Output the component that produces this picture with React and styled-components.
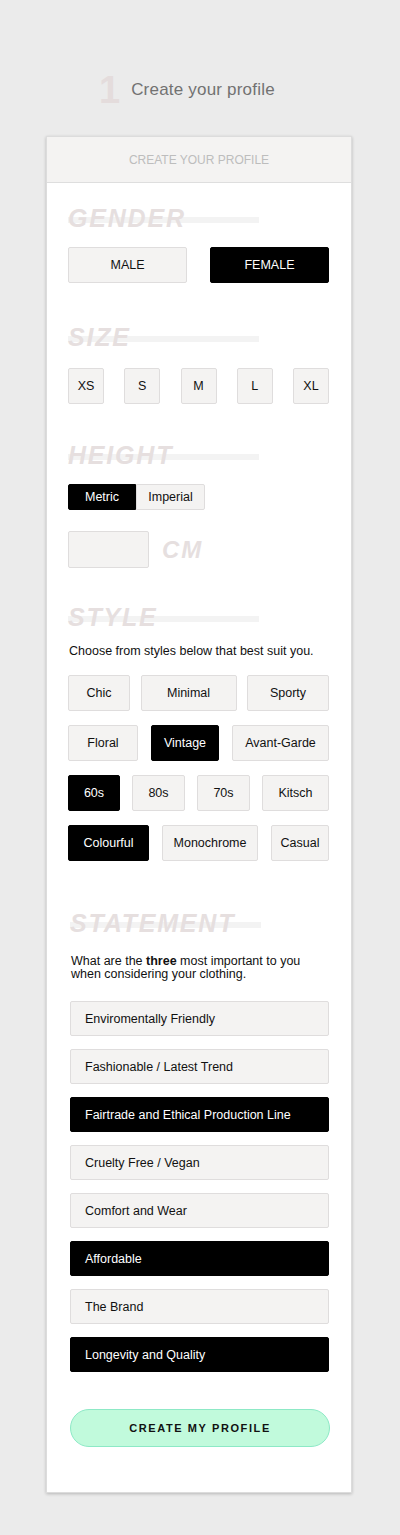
import React, { useState } from 'react';
import styled, { createGlobalStyle, css } from 'styled-components';

const GlobalStyle = createGlobalStyle`
  html, body {
    margin: 0;
    padding: 0;
    background: #ebebeb;
  }
  body {
    font-family: "Liberation Sans", Arial, sans-serif;
    color: #111;
  }
  * {
    box-sizing: border-box;
  }
`;

const Page = styled.div`
  min-height: 1535px;
  padding-top: 70px;
  padding-bottom: 42px;
`;

const StepRow = styled.div`
  display: flex;
  align-items: center;
  gap: 11px;
  height: 40px;
  padding-left: 99px;
`;

const StepNumber = styled.span`
  font-size: 38px;
  font-weight: 700;
  line-height: 40px;
  color: #e4dcdc;
`;

const StepTitle = styled.span`
  font-size: 17px;
  letter-spacing: 0.2px;
  color: #727272;
`;

const Card = styled.div`
  width: 306px;
  margin: 26px 0 0 46px;
  background: #fff;
  border: 1px solid #dcdcdc;
  box-shadow: 0 1px 3px rgba(0, 0, 0, 0.22);
`;

const CardHeader = styled.div`
  height: 46px;
  display: flex;
  align-items: center;
  justify-content: center;
  background: #f4f3f2;
  border-bottom: 1px solid #dedede;
  font-size: 12px;
  color: #bdbdbd;
`;

const CardBody = styled.div`
  padding: 23px 22px 45px 21px;
`;

const Section = styled.section`
  margin-top: ${({ $gap }) => $gap || 0}px;
  padding-left: ${({ $inset }) => $inset || 0}px;
`;

const Heading = styled.h2`
  margin: 0 0 ${({ $after }) => $after ?? 16}px 0;
  font-size: 25px;
  line-height: 25px;
  font-weight: 700;
  font-style: italic;
  letter-spacing: 1.8px;
  color: #e6dfdf;
  background: linear-gradient(#f3f3f3, #f3f3f3) no-repeat;
  background-size: 191px 6px;
  background-position: 0 11px;
`;

const boxBase = css`
  display: flex;
  align-items: center;
  justify-content: center;
  font-family: "Liberation Sans", Arial, sans-serif;
  font-size: 12.5px;
  border-radius: 2px;
  border: 1px solid ${({ $on }) => ($on ? '#000' : '#dfdddd')};
  background: ${({ $on }) => ($on ? '#000' : '#f4f3f2')};
  color: ${({ $on }) => ($on ? '#fff' : '#111')};
  padding: 0;
  cursor: pointer;
`;

const Row = styled.div`
  display: flex;
  justify-content: space-between;
`;

const GenderButton = styled.button`
  ${boxBase};
  width: 119px;
  height: 36px;
`;

const SizeButton = styled.button`
  ${boxBase};
  width: 36px;
  height: 36px;
`;

const UnitToggle = styled.div`
  display: flex;
  width: 137px;
`;

const UnitButton = styled.button`
  ${boxBase};
  width: ${({ $w }) => $w}px;
  height: 26px;
  border-radius: ${({ $first }) => ($first ? '2px 0 0 2px' : '0 2px 2px 0')};
`;

const HeightRow = styled.div`
  display: flex;
  align-items: center;
  gap: 13px;
  margin-top: 21px;
`;

const HeightInput = styled.input`
  width: 81px;
  height: 37px;
  border: 1px solid #dfdddd;
  border-radius: 2px;
  background: #f4f3f2;
  outline: none;
`;

const Unit = styled.span`
  font-size: 24px;
  font-weight: 700;
  font-style: italic;
  letter-spacing: 2px;
  color: #e6dfdf;
`;

const Intro = styled.p`
  margin: 0 0 ${({ $after }) => $after}px 1px;
  font-size: 12.5px;
  line-height: 13px;
  color: #111;

  b {
    font-weight: 700;
  }
`;

const StyleGrid = styled.div`
  display: flex;
  flex-direction: column;
  gap: 14px;
`;

const StyleButton = styled.button`
  ${boxBase};
  width: ${({ $w }) => $w}px;
  height: 36px;
`;

const StatementList = styled.div`
  display: flex;
  flex-direction: column;
  gap: 13px;
  width: 259px;
`;

const StatementItem = styled.button`
  ${boxBase};
  justify-content: flex-start;
  height: 35px;
  padding-left: 14px;
`;

const Submit = styled.button`
  display: block;
  width: 260px;
  height: 38px;
  margin: 37px 0 0 0;
  border-radius: 19px;
  border: 1px solid #8de9c6;
  background: #c1fadc;
  font-family: "Liberation Sans", Arial, sans-serif;
  font-size: 11px;
  font-weight: 700;
  letter-spacing: 1.6px;
  color: #111;
  cursor: pointer;
`;

const styleRows = [
  [['Chic', 62], ['Minimal', 96], ['Sporty', 82]],
  [['Floral', 70], ['Vintage', 68], ['Avant-Garde', 97]],
  [['60s', 52], ['80s', 53], ['70s', 53], ['Kitsch', 67]],
  [['Colourful', 81], ['Monochrome', 96], ['Casual', 58]],
];

const statements = [
  'Enviromentally Friendly',
  'Fashionable / Latest Trend',
  'Fairtrade and Ethical Production Line',
  'Cruelty Free / Vegan',
  'Comfort and Wear',
  'Affordable',
  'The Brand',
  'Longevity and Quality',
];

export default function App() {
  const [gender, setGender] = useState('FEMALE');
  const [size, setSize] = useState(null);
  const [unit, setUnit] = useState('Metric');
  const [styles, setStyles] = useState(['Vintage', '60s', 'Colourful']);
  const [picked, setPicked] = useState([
    'Fairtrade and Ethical Production Line',
    'Affordable',
    'Longevity and Quality',
  ]);

  const toggle = (list, set, value) =>
    set(list.includes(value) ? list.filter((v) => v !== value) : [...list, value]);

  return (
    <Page>
      <GlobalStyle />
      <StepRow>
        <StepNumber>1</StepNumber>
        <StepTitle>Create your profile</StepTitle>
      </StepRow>

      <Card>
        <CardHeader>CREATE YOUR PROFILE</CardHeader>
        <CardBody>
          <Section>
            <Heading>GENDER</Heading>
            <Row>
              {['MALE', 'FEMALE'].map((g) => (
                <GenderButton key={g} $on={gender === g} onClick={() => setGender(g)}>
                  {g}
                </GenderButton>
              ))}
            </Row>
          </Section>

          <Section $gap={42}>
            <Heading $after={18}>SIZE</Heading>
            <Row>
              {['XS', 'S', 'M', 'L', 'XL'].map((s) => (
                <SizeButton key={s} $on={size === s} onClick={() => setSize(s)}>
                  {s}
                </SizeButton>
              ))}
            </Row>
          </Section>

          <Section $gap={39}>
            <Heading>HEIGHT</Heading>
            <UnitToggle>
              <UnitButton $first $w={68} $on={unit === 'Metric'} onClick={() => setUnit('Metric')}>
                Metric
              </UnitButton>
              <UnitButton $w={69} $on={unit === 'Imperial'} onClick={() => setUnit('Imperial')}>
                Imperial
              </UnitButton>
            </UnitToggle>
            <HeightRow>
              <HeightInput type="text" />
              <Unit>{unit === 'Metric' ? 'CM' : 'FT'}</Unit>
            </HeightRow>
          </Section>

          <Section $gap={37}>
            <Heading $after={15}>STYLE</Heading>
            <Intro $after={17}>Choose from styles below that best suit you.</Intro>
            <StyleGrid>
              {styleRows.map((row, i) => (
                <Row key={i}>
                  {row.map(([label, w]) => (
                    <StyleButton
                      key={label}
                      $w={w}
                      $on={styles.includes(label)}
                      onClick={() => toggle(styles, setStyles, label)}
                    >
                      {label}
                    </StyleButton>
                  ))}
                </Row>
              ))}
            </StyleGrid>
          </Section>

          <Section $gap={50} $inset={2}>
            <Heading $after={19}>STATEMENT</Heading>
            <Intro $after={20}>
              What are the <b>three</b> most important to you
              <br />
              when considering your clothing.
            </Intro>
            <StatementList>
              {statements.map((s) => (
                <StatementItem
                  key={s}
                  $on={picked.includes(s)}
                  onClick={() => toggle(picked, setPicked, s)}
                >
                  {s}
                </StatementItem>
              ))}
            </StatementList>
            <Submit>CREATE MY PROFILE</Submit>
          </Section>
        </CardBody>
      </Card>
    </Page>
  );
}
